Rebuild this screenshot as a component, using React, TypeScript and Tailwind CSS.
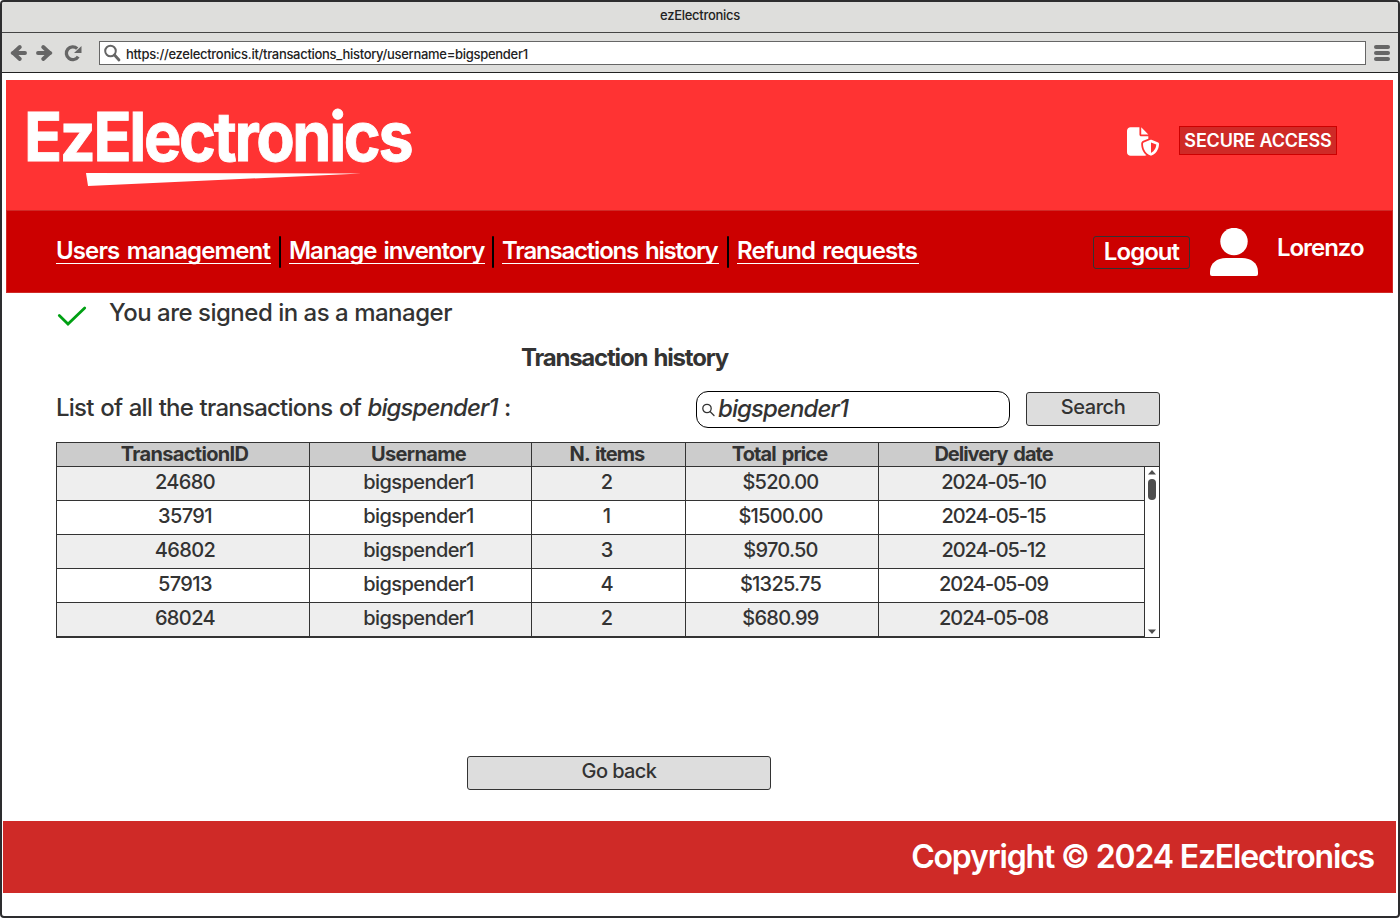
import { FaFileShield } from "react-icons/fa6";

const links = [
  { label: "Users management", cls: "w-[215px] tracking-[-0.86px] [word-spacing:2px]" },
  { label: "Manage inventory", cls: "w-[196px] tracking-[-1.02px] [word-spacing:2px]" },
  { label: "Transactions history", cls: "w-[217px] tracking-[-1.2px] [word-spacing:2px]" },
  { label: "Refund requests", cls: "w-[182px] tracking-[-0.86px] [word-spacing:2px]" },
];

const gaps = ["ml-[8px] mr-[8px]", "ml-[7px] mr-[8px]", "ml-[8px] mr-[8px]"];

const columns = [
  { label: "TransactionID", cls: "w-[253px] pl-[3px] tracking-[-0.68px]" },
  { label: "Username", cls: "w-[222px] pr-[4px] tracking-[-0.65px]" },
  { label: "N. items", cls: "w-[154px] pr-[3px] tracking-[-0.9px] [word-spacing:2px]" },
  { label: "Total price", cls: "w-[193px] pr-[5px] tracking-[-0.88px] [word-spacing:2px]" },
  { label: "Delivery date", cls: "w-[280px] pr-[51px] tracking-[-1px] [word-spacing:2px]" },
];

const cells = [
  "w-[253px] pl-[4px] tracking-[-0.6px]",
  "w-[222px] pr-[4px] tracking-[-0.58px]",
  "w-[154px] pr-[3px]",
  "w-[193px] pr-[3px] tracking-[-0.75px]",
  "w-[266px] pr-[36px] tracking-[-1.08px]",
];

const rows = [
  ["24680", "bigspender1", "2", "$520.00", "2024-05-10"],
  ["35791", "bigspender1", "1", "$1500.00", "2024-05-15"],
  ["46802", "bigspender1", "3", "$970.50", "2024-05-12"],
  ["57913", "bigspender1", "4", "$1325.75", "2024-05-09"],
  ["68024", "bigspender1", "2", "$680.99", "2024-05-08"],
];

function Toolbar() {
  return (
    <div className="flex h-10 shrink-0 items-center border-b border-[#222] bg-[#dededc] pl-2">
      <svg className="h-[18px] w-[72px]" viewBox="0 0 72 18" fill="none" stroke="#666" strokeWidth="3.900">
        <path d="M3 9H15" strokeLinecap="round" />
        <path d="M9.800 3 3.300 9l6.500 6" strokeLinecap="round" />
        <path d="M28 9h12" strokeLinecap="round" />
        <path d="M33.200 3 39.700 9l-6.500 6" strokeLinecap="round" />
        <path d="M67.200 4.600A6.400 6.400 0 1 0 68.200 12.600" strokeWidth="3.300" />
        <path d="M71.500 2V9H64Z" fill="#666" stroke="none" />
      </svg>
      <div className="ml-[17px] flex h-6 w-[1267px] items-center border border-[#666] bg-white pl-1">
        <svg className="h-[18px] w-[18px]" viewBox="0 0 18 18" fill="none" stroke="#666">
          <circle cx="6.500" cy="7" r="5.300" strokeWidth="2" />
          <path d="m10.500 11 4.500 5" strokeWidth="2.800" strokeLinecap="round" />
        </svg>
        <span className="ml-1 whitespace-nowrap pt-[3px] text-[13px] font-medium leading-4 tracking-[-0.3px] text-[#222]">
          https://ezelectronics.it/transactions_history/username=bigspender1
        </span>
      </div>
      <div className="ml-2 flex w-4 flex-col gap-[2px]">
        <div className="h-1 rounded-full bg-[#666]" />
        <div className="h-1 rounded-full bg-[#666]" />
        <div className="h-1 rounded-full bg-[#666]" />
      </div>
    </div>
  );
}

function Logo() {
  return (
    <svg className="mt-[20px] h-[92px] w-[396px] overflow-visible" viewBox="0 0 396 92" fill="#fff">
      <g transform="translate(-2 61) scale(0.925 1)">
        <text fontSize="68" fontWeight="700" letterSpacing="-2.550" stroke="#fff" strokeWidth="0.900">
          EzElectronics
        </text>
      </g>
      <path d="M60 73 335 73.500 62 86Z" />
    </svg>
  );
}

function Banner() {
  return (
    <header className="ml-1 mt-[7px] w-[1387px] shrink-0">
      <div className="flex h-[130px] items-start bg-[#ff3333] pl-5">
        <Logo />
        <FaFileShield className="ml-[705px] mt-[47px] h-[29px] w-[32px] text-white" />
        <div className="ml-[20px] mt-[46px] flex h-[29px] w-[158px] items-center justify-center border border-[#cc0000] bg-[#cf2a27] text-[18px] font-semibold tracking-[-0.17px] text-white">
          SECURE ACCESS
        </div>
      </div>
      <nav className="flex h-[83px] items-start border border-[#cf2a27] bg-[#cc0000] text-[24px] font-semibold leading-7 text-white">
        <div className="ml-[49px] mt-[25px] flex items-start">
          {links.map((link, i) => (
            <div key={link.label} className="flex items-start">
              <a className={`h-[28px] whitespace-nowrap border-b border-white leading-[30px] ${link.cls}`}>{link.label}</a>
              {i < 3 && <div className={`h-8 w-[2px] rounded-full bg-black ${gaps[i]}`} />}
            </div>
          ))}
        </div>
        <div className="ml-auto mr-[202px] mt-[25px] flex h-[33px] w-[97px] justify-center rounded-[3px] border border-[#333] tracking-[-0.95px] leading-[30px]">
          Logout
        </div>
        <svg className="-ml-[182px] mt-[17px] h-12 w-12" viewBox="0 0 48 48" fill="#fff">
          <circle cx="24" cy="13.500" r="13.700" />
          <path d="M0 46V44C0 35 7 30 16 30H32C41 30 48 35 48 44V46Q48 48 46 48H2Q0 48 0 46Z" />
        </svg>
        <span className="ml-[19px] mr-[27px] mt-[23px] w-[88px] tracking-[-1.05px]">Lorenzo</span>
      </nav>
    </header>
  );
}

function TransactionTable() {
  return (
    <div className="ml-[54px] mt-[14px] h-[196px] w-[1104px] shrink-0 border border-[#333] text-[20px] leading-6 text-[#333]">
      <div className="flex h-6 border-b border-[#333] bg-[#ccc] font-bold">
        {columns.map((c, i) => (
          <div key={c.label} className={`flex h-[23px] justify-center leading-[23px] ${i < 4 ? "border-r border-[#333]" : ""} ${c.cls}`}>
            {c.label}
          </div>
        ))}
      </div>
      <div className="flex">
        <div className="font-medium">
          {rows.map((row, r) => (
            <div key={row[0]} className={`flex h-[34px] border-b border-[#333] ${r % 2 ? "bg-white" : "bg-[#eee]"}`}>
              {row.map((value, i) => (
                <div key={i} className={`flex h-[33px] justify-center border-r border-[#333] pt-[3px] ${cells[i]}`}>
                  {value}
                </div>
              ))}
            </div>
          ))}
        </div>
        <div className="flex h-[170px] w-[14px] flex-col items-center bg-white pb-[3px] pt-[3px]">
          <svg className="h-[5px] w-2" viewBox="0 0 8 5" fill="#4d4d4d"><path d="M0 4.500 4 0l4 4.500z" /></svg>
          <div className="mt-1 h-[21px] w-2 rounded-full bg-[#4d4d4d]" />
          <svg className="mt-auto h-[5px] w-2" viewBox="0 0 8 5" fill="#4d4d4d"><path d="M0 .5h8L4 5z" /></svg>
        </div>
      </div>
    </div>
  );
}

export default function App() {
  return (
    <div className="flex h-[918px] w-[1400px] flex-col overflow-hidden rounded-[4px] border-2 border-[#2d2d2f] bg-white font-['Inter',sans-serif] text-[#333]">
      <div className="flex h-[31px] shrink-0 justify-center border-b border-[#444] bg-[#dededc] pt-[5px] text-[13px] font-medium leading-4 tracking-[-0.28px] text-[#222]">
        ezElectronics
      </div>
      <Toolbar />
      <Banner />
      <div className="flex h-10 shrink-0 pl-[55px] text-[24px] font-medium leading-7">
        <svg className="mt-[12px] h-[23px] w-[30px]" viewBox="0 0 30 23" fill="none" stroke="#00a013" strokeWidth="2.800" strokeLinecap="round">
          <path d="m2.300 10.500 8.700 8.500L27.700 3" />
        </svg>
        <span className="ml-[22px] mt-[6px] tracking-[-0.488px]">You are signed in as a manager</span>
      </div>
      <h1 className="ml-[519px] mt-[11px] shrink-0 text-[24px] font-bold leading-7 tracking-[-1.21px] [word-spacing:2px]">Transaction history</h1>
      <div className="mt-[19px] flex h-[37px] shrink-0 items-start pl-[54px]">
        <p className="mt-[3px] w-[640px] text-[24px] font-medium leading-7 tracking-[-0.75px] [word-spacing:0.8px]">
          List of all the transactions of <i className="tracking-[-0.9px]">bigspender1</i> :
        </p>
        <div className="flex h-[37px] w-[314px] items-center rounded-[12px] border border-black pl-[5px]">
          <svg className="h-[14px] w-[14px]" viewBox="0 0 14 14" fill="none" stroke="#333" strokeWidth="1.300">
            <circle cx="5" cy="5.500" r="4.200" />
            <path d="m8 8.500 4 4" strokeLinecap="round" />
          </svg>
          <span className="ml-[2px] pb-px text-[24px] font-medium italic leading-7 tracking-[-0.9px]">bigspender1</span>
        </div>
        <button className="ml-4 mt-px h-[34px] w-[134px] rounded-[3px] border border-[#333] bg-[#ddd] pb-[3px] text-[20px] font-medium leading-[29px] tracking-[-0.45px]">
          Search
        </button>
      </div>
      <TransactionTable />
      <button className="ml-[465px] mt-[118px] h-[34px] w-[304px] shrink-0 rounded-[3px] border border-[#333] bg-[#ddd] pb-[3px] text-[20px] font-medium leading-[29px] tracking-[-0.6px]">
        Go back
      </button>
      <footer className="ml-px mt-[31px] flex h-[72px] w-[1393px] shrink-0 justify-end bg-[#cf2a27] pr-[22px] pt-[16px] text-[32px] font-semibold leading-10 tracking-[-1.19px] text-white">
        Copyright © 2024 EzElectronics
      </footer>
    </div>
  );
}
